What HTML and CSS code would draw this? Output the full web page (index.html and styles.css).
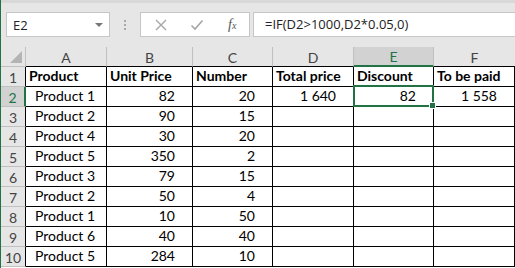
FILE: index.html
```html
<!DOCTYPE html>
<html>
<head>
<meta charset="utf-8">
<link rel="stylesheet" href="styles.css">
</head>
<body>
<div class="app">
  <div class="fbar">
    <div class="namebox"><span class="nb-text">E2</span><span class="nb-arrow"></span></div>
    <div class="grip"><i></i><i></i><i></i></div>
    <div class="btns">
      <svg class="ico" width="14" height="14" viewBox="0 0 14 14"><path d="M2 2 L12 12 M12 2 L2 12" stroke="#a6a6a6" stroke-width="1.4" fill="none"/></svg>
      <svg class="ico" width="14" height="14" viewBox="0 0 14 14"><path d="M1.5 7.5 L5 11 L12.5 2.5" stroke="#a6a6a6" stroke-width="1.6" fill="none"/></svg>
      <span class="fx">f<span class="fx-x">x</span></span>
    </div>
    <div class="formula">=IF(D2&gt;1000,D2*0.05,0)</div>
  </div>
  <div class="sheet">
    <div class="h corner"><span class="tri"></span></div>
    <div class="h col">A</div>
    <div class="h col">B</div>
    <div class="h col">C</div>
    <div class="h col">D</div>
    <div class="h col sel">E</div>
    <div class="h col last">F</div>

    <div class="h row">1</div>
    <div class="c b">Product</div><div class="c b">Unit Price</div><div class="c b">Number</div><div class="c b">Total price</div><div class="c b">Discount</div><div class="c b">To be paid</div>

    <div class="h row rsel">2</div>
    <div class="c p">Product 1</div><div class="c n">82</div><div class="c n">20</div><div class="c n">1 640</div><div class="c n active">82<span class="selbox"><span class="handle"></span></span></div><div class="c n">1 558</div>

    <div class="h row">3</div>
    <div class="c p">Product 2</div><div class="c n">90</div><div class="c n">15</div><div class="c"></div><div class="c"></div><div class="c"></div>

    <div class="h row">4</div>
    <div class="c p">Product 4</div><div class="c n">30</div><div class="c n">20</div><div class="c"></div><div class="c"></div><div class="c"></div>

    <div class="h row">5</div>
    <div class="c p">Product 5</div><div class="c n">350</div><div class="c n">2</div><div class="c"></div><div class="c"></div><div class="c"></div>

    <div class="h row">6</div>
    <div class="c p">Product 3</div><div class="c n">79</div><div class="c n">15</div><div class="c"></div><div class="c"></div><div class="c"></div>

    <div class="h row">7</div>
    <div class="c p">Product 2</div><div class="c n">50</div><div class="c n">4</div><div class="c"></div><div class="c"></div><div class="c"></div>

    <div class="h row">8</div>
    <div class="c p">Product 1</div><div class="c n">10</div><div class="c n">50</div><div class="c"></div><div class="c"></div><div class="c"></div>

    <div class="h row">9</div>
    <div class="c p">Product 6</div><div class="c n">40</div><div class="c n">40</div><div class="c"></div><div class="c"></div><div class="c"></div>

    <div class="h row">10</div>
    <div class="c p">Product 5</div><div class="c n">284</div><div class="c n">10</div><div class="c"></div><div class="c"></div><div class="c"></div>
  </div>
</div>
</body>
</html>
```
FILE: styles.css
```css
html, body {
  margin: 0;
  padding: 0;
  background: #ffffff;
  overflow: hidden;
}
.app {
  width: 514px;
  height: 268px;
  border-left: 1px solid #217346;
  font-family: Lato, "Liberation Sans", sans-serif;
  overflow: hidden;
}
.fbar {
  height: 47px;
  box-sizing: border-box;
  background: #e6e6e6;
  border-top: 3px solid #d9d9d9;
  padding-top: 9px;
  display: flex;
  align-items: flex-start;
}
.namebox {
  margin-left: 5px;
  width: 104px;
  height: 25px;
  box-sizing: border-box;
  background: #fff;
  border: 1px solid #c6c6c6;
  display: flex;
  align-items: center;
  justify-content: space-between;
  padding: 0 6px 0 6px;
  font-family: "Open Sans", "Liberation Sans", sans-serif;
  font-size: 13px;
  color: #222;
}
.nb-arrow {
  width: 0;
  height: 0;
  border-left: 4px solid transparent;
  border-right: 4px solid transparent;
  border-top: 4px solid #777;
  margin-top: 1px;
}
.grip {
  width: 30px;
  height: 25px;
  display: flex;
  flex-direction: column;
  align-items: center;
  justify-content: center;
  gap: 2px;
}
.grip i {
  display: block;
  width: 2px;
  height: 2px;
  background: #a8a8a8;
}
.btns {
  width: 110px;
  height: 25px;
  box-sizing: border-box;
  background: #fff;
  border: 1px solid #c6c6c6;
  display: flex;
  align-items: center;
  padding-left: 13px;
  gap: 22px;
}
.fx {
  font-family: "Liberation Serif", serif;
  font-style: italic;
  font-size: 14px;
  color: #555;
  margin-left: 2px;
}
.fx-x {
  font-size: 10px;
}
.formula {
  margin-left: 3px;
  flex: 1;
  height: 25px;
  box-sizing: border-box;
  background: #fff;
  border: 1px solid #c6c6c6;
  border-right: none;
  padding-left: 11px;
  font-family: "Open Sans", "Liberation Sans", sans-serif;
  font-size: 13px;
  line-height: 23px;
  color: #222;
}
.sheet {
  display: grid;
  grid-template-columns: 25px 81px 86px 80px 81px 80px 81px;
  grid-auto-rows: 20px;
  font-size: 14px;
}
.h {
  background: #e6e6e6;
  color: #444;
  box-sizing: border-box;
  border-right: 1px solid #c0c0c0;
  border-bottom: 1px solid #c0c0c0;
  display: flex;
  align-items: center;
  justify-content: center;
  font-size: 14px;
  padding-top: 1px;
}
.corner {
  position: relative;
}
.tri {
  position: absolute;
  right: 3px;
  bottom: 3px;
  width: 0;
  height: 0;
  border-left: 12px solid transparent;
  border-bottom: 12px solid #b4b4b4;
}
.col {
  border-bottom-color: #000;
}
.col.last {
  border-right: none;
}
.col.sel {
  background: #d2d2d2;
  color: #217346;
  border-bottom: 2px solid #217346;
}
.row {
  border-right-color: #000;
}
.row.rsel {
  background: #d2d2d2;
  color: #217346;
  border-right: 2px solid #217346;
}
.c {
  box-sizing: border-box;
  border-right: 1px solid #000;
  border-bottom: 1px solid #000;
  color: #000;
  white-space: nowrap;
  overflow: visible;
  display: flex;
  align-items: flex-end;
  padding: 0 3px 1px 3px;
  line-height: 18px;
}
.c.b {
  font-weight: bold;
}
.c.p {
  padding-left: 9px;
}
.c.n {
  justify-content: flex-end;
  padding-right: 17px;
}
.active {
  position: relative;
}
.selbox {
  position: absolute;
  left: -1px;
  top: -2px;
  right: -1px;
  bottom: -1px;
  border: 2px solid #217346;
}
.handle {
  position: absolute;
  right: -4px;
  bottom: -4px;
  width: 5px;
  height: 5px;
  background: #217346;
  border: 1px solid #fff;
}
```
